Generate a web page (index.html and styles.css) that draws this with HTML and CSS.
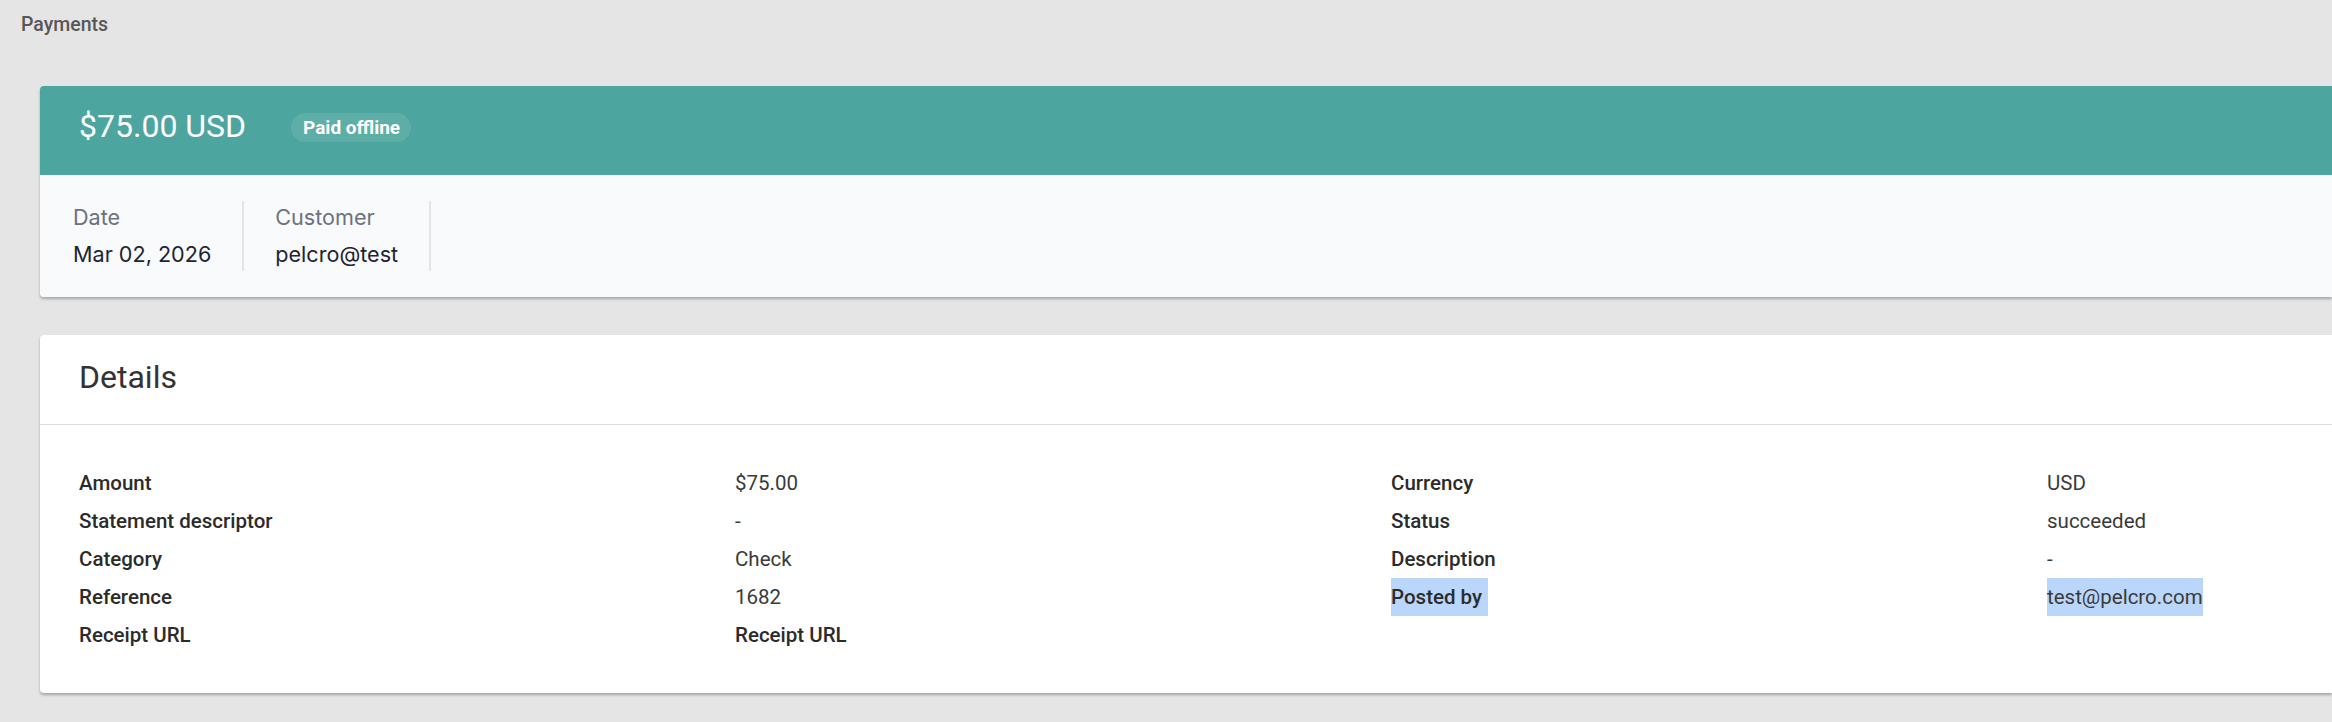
FILE: index.html
```html
<!DOCTYPE html>
<html lang="en">
  <head>
    <meta charset="UTF-8" />
    <meta name="viewport" content="width=device-width, initial-scale=1.0" />
    <title>Payments</title>
    <link rel="stylesheet" href="styles.css">
  </head>
  <body>
    <div class="breadcrumb">Payments</div>

    <div class="card summary">
      <div class="summary-head">
        <span class="summary-amount">$75.00 USD</span>
        <span class="badge">Paid offline</span>
      </div>
      <div class="summary-info">
        <div class="info-item">
          <div class="info-label">Date</div>
          <div class="info-value">Mar 02, 2026</div>
        </div>
        <div class="info-item">
          <div class="info-label">Customer</div>
          <div class="info-value">pelcro@test</div>
        </div>
      </div>
    </div>

    <div class="card details">
      <div class="details-head">Details</div>
      <div class="details-grid">
        <div class="d-label">Amount</div>
        <div class="d-value">$75.00</div>
        <div class="d-label">Currency</div>
        <div class="d-value">USD</div>

        <div class="d-label">Statement descriptor</div>
        <div class="d-value">-</div>
        <div class="d-label">Status</div>
        <div class="d-value">succeeded</div>

        <div class="d-label">Category</div>
        <div class="d-value">Check</div>
        <div class="d-label">Description</div>
        <div class="d-value">-</div>

        <div class="d-label">Reference</div>
        <div class="d-value">1682</div>
        <div class="d-label"><span class="selected trailing">Posted by</span></div>
        <div class="d-value"><span class="selected">test@pelcro.com</span></div>

        <div class="d-label">Receipt URL</div>
        <div class="d-value link">Receipt URL</div>
      </div>
    </div>
  </body>
</html>
```

FILE: styles.css
```css
/* base */
* {
  margin: 0;
  padding: 0;
  box-sizing: border-box;
}

body {
  background-color: #e4e5e4;
  font-family: Roboto, "Liberation Sans", Arial, sans-serif;
  color: #333;
  min-height: 722px;
  overflow: hidden;
}

/* breadcrumb */
.breadcrumb {
  padding: 13px 0 0 21px;
  font-size: 19.5px;
  line-height: 23px;
  font-weight: 500;
  color: #575757;
}

/* cards (they run on past the right edge of the window) */
.card {
  margin-left: 40px;
  border-radius: 4px 0 0 4px;
  box-shadow: 0 2px 3px rgba(0, 0, 0, 0.28);
  overflow: hidden;
}

.summary {
  margin-top: 50px;
}

.summary-head {
  display: flex;
  align-items: flex-start;
  height: 89px;
  padding: 22px 39px 0;
  background-color: #4ca59f;
  color: #fff;
}

.summary-amount {
  font-size: 32px;
  line-height: 37.5px;
  font-weight: 400;
}

.badge {
  margin: 5px 0 0 45px;
  padding: 0 11px 0 12px;
  height: 29px;
  line-height: 29px;
  font-size: 19px;
  font-weight: 700;
  border-radius: 15px;
  background-color: rgba(255, 255, 255, 0.1);
}

.summary-info {
  display: flex;
  padding: 26px 0 26px 33px;
  background-color: #f9fafb;
  font-family: Inter, "Liberation Sans", Arial, sans-serif;
  font-size: 21.6px;
}

.info-item {
  padding: 0 31px;
  border-right: 2px solid #e3e5ea;
}

.info-item:first-child {
  padding-left: 0;
}

.info-label {
  line-height: 33px;
  color: #6b7280;
}

.info-value {
  margin-top: 4px;
  line-height: 33px;
  color: #1f2433;
}

/* details */
.details {
  margin-top: 38px;
  background-color: #fff;
}

.details-head {
  padding: 23px 39px 28px;
  font-size: 32px;
  line-height: 38px;
  color: #333;
  border-bottom: 1px solid #dcdcdc;
}

.details-grid {
  display: grid;
  grid-template-columns: repeat(4, 656px);
  padding: 39px 39px 39px;
  font-size: 20.5px;
  line-height: 38px;
}

.d-label {
  font-weight: 500;
  color: #2b2b2b;
}

.d-value {
  color: #3a3a3a;
}

.d-value.link {
  font-weight: 500;
  color: #2b2b2b;
}

.selected {
  display: inline-block;
  background-color: #bad6fa;
}

.selected.trailing {
  padding-right: 6px;
}
```
